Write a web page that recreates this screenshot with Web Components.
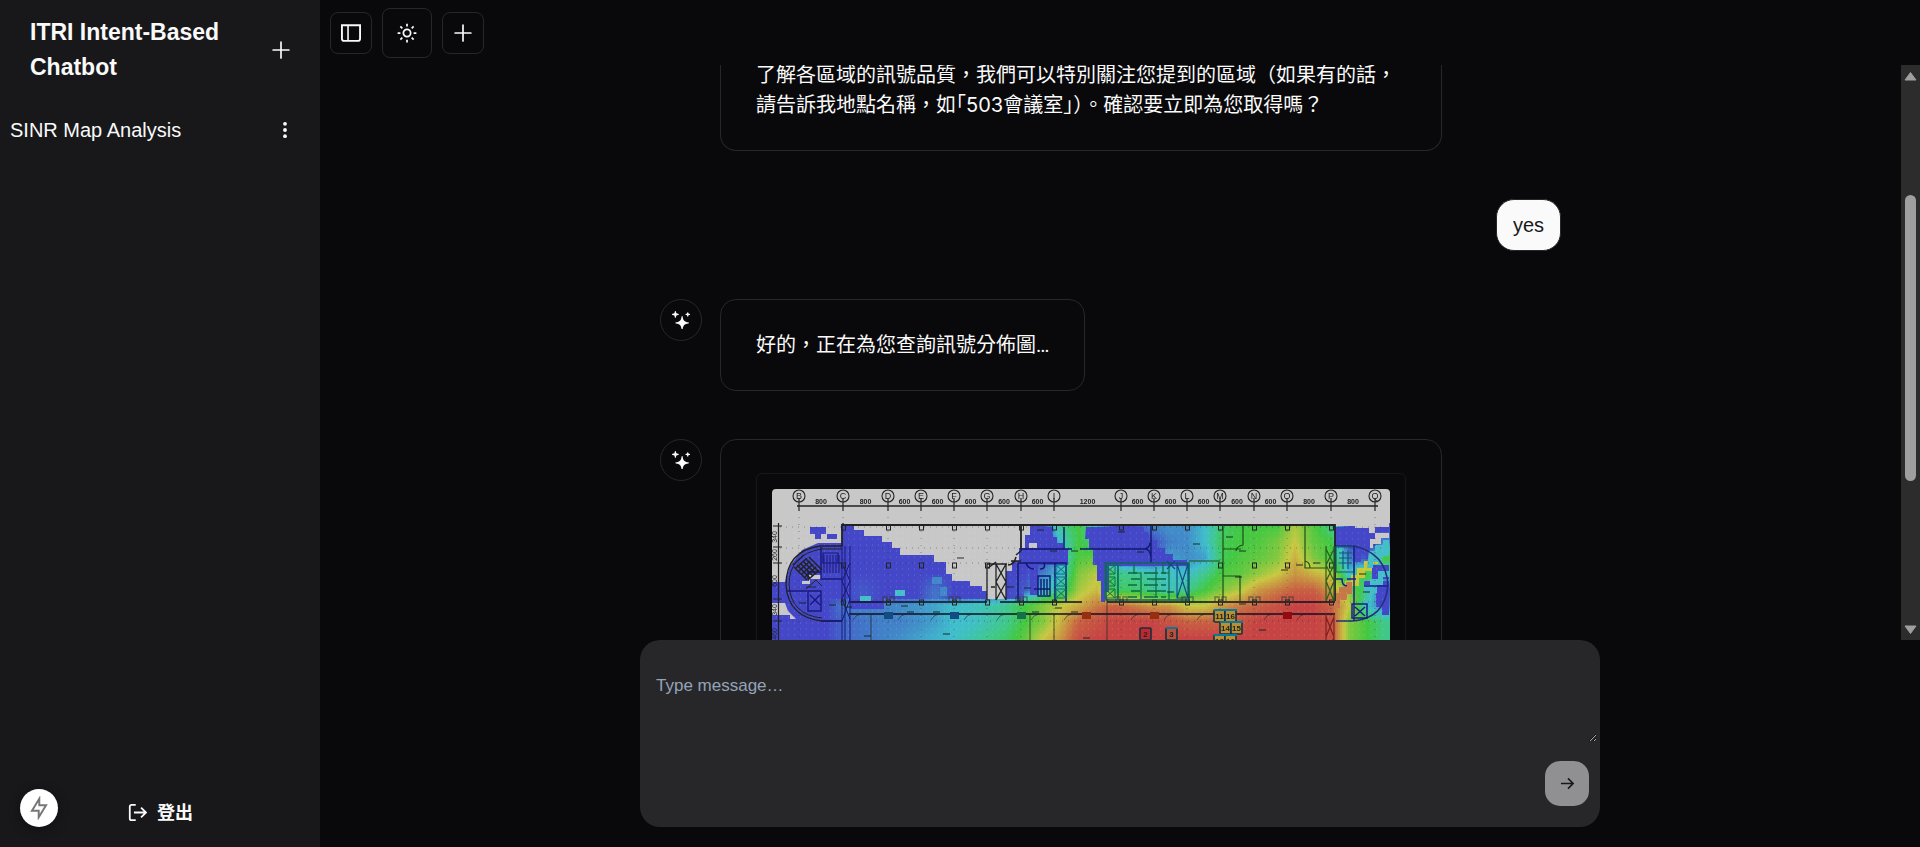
<!DOCTYPE html>
<html lang="zh-TW">
<head>
<meta charset="utf-8">
<title>ITRI Intent-Based Chatbot</title>
<style>
html,body{height:100%}
body{margin:0;background:#09090b;color:#fafafa;font:20px/30px Inter,"Noto Sans CJK TC",sans-serif}
</style>
</head>
<body>
<chat-app></chat-app>
<script>
const define = (name, html, setup) => {
  const t = document.createElement('template');
  t.innerHTML = `<style>*{box-sizing:border-box}svg{display:block}button{font:inherit;color:inherit;background:none;border:0;padding:0;display:flex;align-items:center;justify-content:center}</style>` + html;
  customElements.define(name, class extends HTMLElement {
    constructor() {
      super();
      this.attachShadow({ mode: 'open' }).append(t.content.cloneNode(true));
    }
    connectedCallback() { if (setup) setup(this, this.shadowRoot); }
  });
};

const icons = {
  plus: '<path fill="currentColor" d="M8.75 1a.75.75 0 0 0-1.5 0v6.25H1a.75.75 0 0 0 0 1.5h6.25V15a.75.75 0 0 0 1.5 0V8.75H15a.75.75 0 0 0 0-1.5H8.75z"/>',
  panel: '<path fill="currentColor" fill-rule="evenodd" d="M6.245 2.5H14.5v10a1 1 0 0 1-1 1H6.245v-11ZM4.995 2.5H1.5v10a1 1 0 0 0 1 1h2.495v-11ZM0 1h16v11.5a2.5 2.5 0 0 1-2.5 2.5h-11A2.5 2.5 0 0 1 0 12.5V1Z"/>',
  sun: '<g fill="none" stroke="currentColor" stroke-width="1.4"><circle cx="8" cy="8" r="2.9"/><path d="M8 .5v2.2M8 13.3v2.2M.5 8h2.2M13.3 8h2.2M2.7 2.7l1.55 1.55M11.75 11.75l1.55 1.55M2.7 13.3l1.55-1.55M11.75 4.25l1.55-1.55"/></g>',
  dots: '<g fill="currentColor"><circle cx="8" cy="2.5" r="1.7"/><circle cx="8" cy="8" r="1.7"/><circle cx="8" cy="13.5" r="1.7"/></g>',
  spark: '<path fill="currentColor" d="M2.5.5a.5.5 0 0 1 1 0c.1 1.5.5 1.9 2 2a.5.5 0 0 1 0 1c-1.5.1-1.9.5-2 2a.5.5 0 0 1-1 0c-.1-1.5-.5-1.9-2-2a.5.5 0 0 1 0-1c1.5-.1 1.9-.5 2-2ZM13.5 1.5a.5.5 0 0 1 1 0c.1.8.2.9 1 1a.5.5 0 0 1 0 1c-.8.1-.9.2-1 1a.5.5 0 0 1-1 0c-.1-.8-.2-.9-1-1a.5.5 0 0 1 0-1c.8-.1.9-.2 1-1ZM8.5 5a.5.5 0 0 1 1 0c.4 3.3 1.7 4.600 5 5a.5.5 0 0 1 0 1c-3.3.4-4.600 1.700-5 5a.5.5 0 0 1-1 0c-.4-3.300-1.700-4.600-5-5a.5.5 0 0 1 0-1c3.300-.4 4.600-1.700 5-5Z"/>',
  logout: '<path fill="none" stroke="currentColor" stroke-width="1.5" d="M6.5 1.5H3A1.5 1.5 0 0 0 1.5 3v10A1.5 1.5 0 0 0 3 14.5h3.5M5 8h10M11 3.8 15.2 8 11 12.2"/>',
  arrow: '<path fill="none" stroke="currentColor" stroke-width="1.7" d="M1 8h13M8.5 2.5 14 8l-5.5 5.5"/>',
  bolt: '<path fill="none" stroke="currentColor" stroke-width="1.3" d="M8.2 1.800V6.200h4.500L7.800 14.200V9.800H3.300Z"/>'
};
customElements.define('ui-icon', class extends HTMLElement {
  constructor() { super(); this.attachShadow({ mode: 'open' }); }
  connectedCallback() {
    const s = this.getAttribute('size') || 20;
    this.shadowRoot.innerHTML = `<style>:host{display:block;flex:none}svg{display:block}</style><svg width="${s}" height="${s}" viewBox="0 0 16 16" aria-hidden="true">${icons[this.getAttribute('name')]}</svg>`;
  }
});

define('side-bar', `
<style>
:host{display:flex;flex-direction:column;width:320px;flex:none;background:#18181b;font-family:"Liberation Sans","Noto Sans CJK TC",sans-serif}
header{display:flex;align-items:center;justify-content:space-between;padding:15px 30px;gap:20px}
h1{margin:0;font-size:23px;line-height:35px;font-weight:700}
header button{width:20px;height:40px}
nav{flex:1;padding:5px 10px}
.row{display:flex;align-items:center;justify-content:space-between;height:50px;padding-right:15px}
a{color:inherit;text-decoration:none}
.row button{width:20px;height:30px}
footer{display:flex;align-items:center;padding:0 20px;height:72px;margin-bottom:3px}
.badge{width:38px;height:38px;border-radius:50%;background:#fff;color:#777;box-shadow:0 2px 12px #0006}
.out{gap:10px;font-size:18px;font-weight:600;margin-left:70px;margin-top:9px}
</style>
<header><h1>ITRI Intent-Based Chatbot</h1><button aria-label="New chat"><ui-icon name="plus" size="18"></ui-icon></button></header>
<nav><div class="row"><a href="#">SINR Map Analysis</a><button aria-label="More"><ui-icon name="dots" size="18"></ui-icon></button></div></nav>
<footer><button class="badge" aria-label="Dev tools"><ui-icon name="bolt" size="24"></ui-icon></button><button class="out"><ui-icon name="logout" size="19"></ui-icon>登出</button></footer>`);

define('top-bar', `
<style>
:host{display:flex;align-items:center;gap:10px;padding:8px 10px 7px}
button{width:42px;height:42px;border:1px solid #27272a;border-radius:8px}
.big{width:50px;height:50px}
</style>
<button aria-label="Toggle sidebar"><ui-icon name="panel"></ui-icon></button>
<button class="big" aria-label="Theme"><ui-icon name="sun"></ui-icon></button>
<button aria-label="New chat"><ui-icon name="plus" size="18"></ui-icon></button>`);

define('bot-message', `
<style>
:host{display:flex;gap:18px;align-items:flex-start}
.avatar{width:42px;height:42px;flex:none;border:1px solid #27272a;border-radius:50%;display:grid;place-items:center}
.card{min-width:0;max-width:722px;border:1px solid #27272a;border-radius:16px;padding:30px 35px}
:host([continued]) .avatar{visibility:hidden}
:host([continued]) .card{border-top:0;border-top-left-radius:0;border-top-right-radius:0;padding-top:0}
:host([media]) .card{flex:1;padding-top:33px}
</style>
<div class="avatar"><ui-icon name="spark" size="18"></ui-icon></div><div class="card"><slot></slot></div>`);

define('user-message', `
<style>
:host{display:flex;justify-content:flex-end;font-family:"Liberation Sans",sans-serif}
div{background:#fafafa;color:#18181b;border:1px solid #27272a;border-radius:18px;padding:10px 16px}
</style><div><slot></slot></div>`);

define('scroll-rail', `
<style>
:host{display:flex;flex-direction:column;align-items:center;width:19px;flex:none;background:#2c2c2c;color:#9f9f9f;padding:6px 0 5px}
.track{flex:1;width:11px;display:flex;flex-direction:column}
.before{flex:114}.thumb{flex:286;background:#9f9f9f;border-radius:6px}.after{flex:144}
</style>
<svg width="13" height="10"><path d="M6.5 1.5 12 9H1Z" fill="currentColor" stroke="currentColor" stroke-linejoin="round"/></svg>
<div class="track"><div class="before"></div><div class="thumb"></div><div class="after"></div></div>
<svg width="13" height="10"><path d="M6.5 8.5 12 1H1Z" fill="currentColor" stroke="currentColor" stroke-linejoin="round"/></svg>`);

/* Signal strength samples: one row per 16 px from y = 36, one column per 18 px. */
const field = [
 [0,0,0,0,0,0,0,0,0,0,0,0,0,0,0,0,3,4,2,0,0,1,1.3,1.2,2,3.5,4,4,4,5.6,4.3,3,0,0,0],
 [0,0,0,0,0,0,0,0,0,0,0,0,0,0,0,0,2,4,3,0,0,0,1,1.2,2,3.8,4,4.2,4.8,6,4.5,4,0,0,1],
 [0,0,0,0,0,0,0,0,0,0,0,0,0,0,0,0,2,4.2,4.5,1,0,0,1.5,1.2,1.5,3.7,4.2,4.5,5,6.5,5,4,1,0,4],
 [0,0,0,0,0,0,0,0,0,0,0,0,0,0,0,1,2,5,5.8,3,3,2.5,2.2,2,3,4.2,4.5,5.3,6,7,6.5,6,2,4,2],
 [0,0,0,0,0,0.3,0,0,0,0.8,0,0,0,0,0.3,2,3,5.5,6.3,3.5,3.5,3,2.2,3,4,5,5.8,7,7.5,8,8,7,5,3,0],
 [0,0,0,0,1,1,1,1.2,1.4,1.6,2,2.2,2.5,3,4,5,6,6.6,7.5,8,7.5,7,7,6,6,7,7.6,8,8.5,9,9,8,6,2,1],
 [0,0,0,0,.6,.8,1,1,1.2,1.5,2,2,2.5,3,4,5,6.5,8,8.5,9,9,9,8.5,8,8,8,8.5,9,9,9,9,8.6,5,4,3],
 [0,0,0,0,.6,.8,1,1.2,1.5,1.8,2,2.5,3,3.5,4.5,6,7,8.5,9,9,9,9,9,9,9,9,9,9,9,9,9,8.6,5,4,3]];
const ramp = [[68,72,200],[66,128,200],[64,190,204],[64,200,140],[68,200,66],[130,200,64],[200,200,66],[200,150,66],[200,96,66],[198,68,68]];
const lerp = (a, b, t) => a + (b - a) * t;
const colour = v => {
  const i = Math.min(8, Math.floor(v)), t = v - i;
  return `rgb(${ramp[i].map((c, k) => Math.round(lerp(c, ramp[i + 1][k], t)))})`;
};

define('signal-map', `
<style>
:host{display:block;border:1px solid #18181b;border-radius:6px;padding:15px}
figure{margin:0;display:grid;border-radius:4px;overflow:hidden;background:#c8c8c8}
canvas,svg{grid-area:1/1;width:100%;height:auto}
svg{font:7px "Liberation Sans",sans-serif}
</style>
<figure><canvas width="618" height="220"></canvas>
<svg viewBox="0 0 618 220" role="img" aria-label="SINR map"></svg></figure>`, (host, root) => {
  const ctx = root.querySelector('canvas').getContext('2d');
  for (let y = 34; y < 220; y += 2) for (let x = 0; x < 618; x += 2) {
    // the corridor wall at y = 110 separates the rooms on the left from the hall
    const wall = y < 110 && x < 252;
    const gx = Math.min(x / 18, 33.99), gy = Math.max(0, Math.min((y - 36) / 16, wall ? 4 : 6.99));
    const i = Math.floor(gx), j = Math.floor(gy);
    ctx.fillStyle = colour(lerp(lerp(field[j][i], field[j][i + 1], gx - i), lerp(field[j + 1][i], field[j + 1][i + 1], gx - i), gy - j));
    ctx.fillRect(x, y, 2, 2);
  }
  const shape = (fill, d) => { ctx.fillStyle = fill; ctx.fill(new Path2D(d)); };
  shape('#4448c8', 'M258 38h23v10h4v6h6v6h5v16h-30v30h-8V80h-12V60h6V48h6Z M78 110h34v10H78Z');
  shape('#4448c8', 'M314 38h58v5h5v8h8v8h8v6h8v6h14v6h-78v26h-4v10h-4V92h-4V76h-4V60h-4V50h-4Z');
  shape('#4448c8', 'M563 38h38v5h5v14h-9v8h-8v8h-6v-16h-20Z M592 92h25v12h-25Z M604 104h13v22h-7v-8h-6Z M600 76h17v14h-17Z');
  shape('#c8c835', 'M573 92h6v-6h6v-7h7v-7h7v-5h7v8h-6v7h-7v7h-6v8h-7v6h-7Z');
  shape('#44bec8', 'M597 62h6v-6h8v-5h6v16h-8v6h-8v6h-6Z M592 96h6v-6h8v-8h11v6h-6v8h-6v8h-13Z');
  shape('#c87848', 'M562 104h5v-6h7v-5h6v12h-5v6h-7v8h-6Z');
  shape('#4088c8', 'M160 88h10v7h-10Z M168 98h7v9h-7Z');
  shape('#44bec8', 'M123 101h10v6h-10Z M88 107h11v5H88Z');
  // areas without coverage
  const grey = '#c8c8c8';
  shape(grey, 'M0 34h258v12h-5v13h-6v13h-7v10h-6v28h-19v-8h-5v-5h-12v-5h-18v-7h-6v-12h-12v-7h-34v-7h-8v-6h-10v-6h-18v-6h-10v-5h-10v-4H70v22H46l-16 7-12 16-5 16H0Z');
  shape(grey, 'M0 114h13l3 8 8 8h-6v-4H0ZM30 92h7v-6h12v4H38v5h-8ZM257 54h8v5h-8Z M258 34h359v3H258Z');
  shape(grey, 'M583 34h34v5h-14v5h-6v-5h-14ZM603 44h14v5h-8v6h-8v4h-3V50h5Z');
  shape('#4448c8', 'M38 38h16v7h-5v5h-6v-5h-5ZM55 45h10v5H55Z M603 38h14v5h-14Z');

  const L = [], T = [];
  const line = (d, w = 1, c = '#222') => L.push(`<path d="${d}" fill="none" stroke="${c}" stroke-width="${w}"/>`);
  const text = (x, y, s, extra = '') => T.push(`<text x="${x}" y="${y}" text-anchor="middle" ${extra}>${s}</text>`);
  const axes = { B: 27, C: 71, D: 116, E: 149, F: 182, G: 215, H: 249, I: 282, J: 349, K: 382, L: 415, M: 448, N: 482, O: 515, P: 559, Q: 603 };
  const xs = Object.values(axes);
  line('M25 17H606', 1.5);
  Object.entries(axes).forEach(([k, x]) => {
    L.push(`<circle cx="${x}" cy="7" r="6" fill="none" stroke="#222" stroke-width="1.1"/>`);
    line(`M${x} 9V22`, 1.2);
    line(`M${x} 28V220`, 1, '#2226" stroke-dasharray="1 6');
    text(x, 10, k, 'font-size="9"');
  });
  xs.slice(1).forEach((x, i) => { const w = x - xs[i]; text(x - w / 2, 15, w > 60 ? 1200 : w > 40 ? 800 : 600, 'font-weight="bold"'); });
  [38, 59, 74, 113, 132].forEach(y => line(`M8 ${y}H612`, 1, '#2226" stroke-dasharray="1 5'));
  for (let y = 44; y < 220; y += 6) line(`M4 ${y}H616`, 1, '#fff3" stroke-dasharray="1 5');
  line('M6.5 34V220M1 37h9M1 58h9M1 74h9M1 110h9M1 132h9', 1.2);
  [[48, 340], [66, 260], [92, 600], [121, 340], [145, 460]].forEach(([y, s]) => text(0, 0, s, `transform="translate(5 ${y}) rotate(-90)"`));
  // outer walls
  line('M70 57V36H563V112M249 36V60', 1.8);
  line('M77 113H215M228 113H310M335 113H563M77 125H563', 1.3, '#112');
  line('M70 57H48Q14 62 14 96Q16 128 50 132H70', 1.3);
  line('M70 60H50Q17 65 17 96Q19 126 50 129', 1);
  line('M564 57H582Q614 64 616 96Q613 130 580 132H564', 1.6, '#20307a');
  line('M70 57V220M73 57V220M78 57V220M70 74l8 18-8 18 8 20M78 74l-8 18 8 18-8 22', 1, '#18187a');
  line('M49 58V90h21M49 132h21M36 90v-7h13M36 102h13v20h-13ZM38 106l10 10M48 106l-10 10M15 102h20', 1.4, '#18187a');
  for (let k = 0; k < 6; k++) line(`M${52 + k * 3} 66v18`, 1, '#18187a');
  line('M51 64h15v10H51ZM51 74h18', 1.2, '#18187a');
  // seating in the round room
  for (let k = 0; k < 6; k++) {
    line(`M${22 + k * 3} ${78 - k * 2}l13 13`, 1.5);
    line(`M${21 + k * 3} ${76 + k * 3}l11-10`, 1.4);
  }
  line('M34 100l10-9 6 6M34 98h10', 1);
  // columns along the facades
  xs.slice(1, 15).forEach((x, i) => { [37, 75, 112].forEach(y => { if (y !== 75 || i < 5 || i > 9) L.push(`<rect x="${x - 1.5}" y="${y - 1}" width="4" height="5" fill="none" stroke="#222"/>`); }); });
  // service core, left
  line('M215 75v36M224 75v36M234 75v36M215 75h20M224 75l10 18-10 18M234 75l-10 18 10 18', 1.3);
  line('M216 79l8-6M236 76q6 0 8-8M244 66l6-5M239 72h10M219 98h4', 1.5);
  line('M248 60H300M246 74H294V113M246 74V113M283 74V112M254 74q2 6 8 6M272 74q2 6-4 6M292 38V60', 1.5, '#101870');
  line('M266 87h12v20h-12ZM269 90v16M272 90v16M275 90v16M262 100h16', 1.4, '#101870');
  for (const x of [284, 333]) for (const y of [76, 88, 100]) line(`M${x} ${y}h10v9h-10ZM${x} ${y}l10 9M${x + 10} ${y}l-10 9`, 1, x < 300 ? '#0c6888' : '#0f7048');
  // service core, middle
  line('M308 60H373q4-1 5-6M379 36V74M373 60q5 0 6 8', 1.4, '#101870');
  line('M334 74V111H417V74ZM346 75v36', 1.6, '#0a6a55');
  for (let k = 0; k < 5; k++) line(`M${356 + (k % 2) * 3} ${84 + k * 6}h9M${372 + (k % 2) * 3} ${84 + k * 6}h14M389 ${84 + k * 6}h5`, 1.3, '#0a6a45');
  line('M362 75v9h7v26M384 78v30M391 75v9h6M397 74v37', 1.2, '#0a6a45');
  line('M405 75h11v34h-11ZM405 75l11 34M416 75l-11 34M395 72l8 8M403 72l-8 8', 1.1, '#104880');
  // rooms, right
  line('M417 72H448M451 36V113M451 60h18M471 36v20q-6 1-7 6M451 87h17v25M533 36V79h22M533 72q5 1 5 7M455 87h12', 1.2, '#185018');
  line('M554 57v55M562 57v55M554 60l8 16-8 16 8 20M562 60l-8 16 8 16-8 20', 1.2, '#28601c');
  line('M554 125v95M562 125v95M554 128l8 20-8 20M562 128l-8 20', 1.2, '#802020');
  line('M564 58h18v25h-18ZM567 64h13M567 69h13M567 74h13M571 62v18M576 62v18', 1.2, '#105878');
  line('M582 57v75M564 90h6q0 7 5 7M575 90h9M592 97h24M580 115h15v14h-15ZM583 118l10 9M593 118l-10 9', 1.5, '#182088');
  // corridor doors
  xs.slice(1, 14).forEach((x, i) => {
    if (i % 2 || i > 9) line(`M${x - 5} 108h4v5h-4ZM${x + 2} 108h4v5h-4Z`, 1.5, '#3338');
    line(`M${x + 18} 125q-6 1-8 6`, 1, '#2228');
  });
  [116, 182, 249, 314, 382, 515].forEach(x => L.push(`<rect x="${x - 4}" y="123" width="9" height="7" fill="${x < 200 ? '#124c80' : x < 300 ? '#147048' : x > 500 ? '#900c10' : '#943010'}"/>`));
  line('M99 125V220M258 125V220M282 125V220M335 110V220', 1.2, '#2229');
  [[30,114],[60,116],[76,118],[132,117],[138,123],[164,123],[95,147],[174,145],[188,69],[238,98],[255,99],[268,41],[281,62],[302,62],[263,123],[286,119],[302,123],[314,149],[349,43],[368,63],[398,103],[424,55],[457,48],[470,62],[466,88],[512,81],[527,76],[544,74],[470,115],[490,141],[590,85],[594,103]].forEach(([x, y]) => line(`M${x - 3} ${y}h7`, 2, '#1227'));
  // numbered seats
  const seat = (x, y, s, c) => { L.push(`<rect x="${x}" y="${y}" width="11" height="12" rx="1" fill="${c}" stroke="#14303c" stroke-width="1.6"/>`); text(x + 5.5, y + 9, s, 'font-weight="bold" font-size="8"'); };
  seat(368, 139, 2, '#c02830'); seat(394, 139, 3, '#b8503c');
  [[442, 121, 11], [453, 121, 16], [448, 133, 14], [459, 133, 15], [442, 146, 13], [453, 146, 12]].forEach(([x, y, s]) => seat(x, y, s, '#b89032'));
  line('M394 139h11M442 121h23M448 133h23M442 146h23', 1.8, '#0878a0');
  root.querySelector('svg').innerHTML = L.join('') + `<g fill="#222">${T.join('')}</g>`;
});

define('chat-feed', `
<style>
:host{display:flex;flex:1;min-height:0;overflow:hidden}
.view{flex:1;overflow:hidden;min-width:0}
.list{max-width:961px;margin:-5px auto 0;padding:0 30px;display:flex;flex-direction:column;gap:48px}
.half{font-feature-settings:"halt"}
.dots{font-family:Roboto,sans-serif}
</style>
<div class="view"><div class="list">
<bot-message continued>了解各區域的訊號品質，我們可以特別關注您提到的區域（如果有的話，請告訴我地點名稱，如<span class="half">「</span>503會議室」）。確認要立即為您取得嗎？</bot-message>
<user-message>yes</user-message>
<bot-message>好的，正在為您查詢訊號分佈圖<span class="dots">…</span></bot-message>
<bot-message media><signal-map></signal-map></bot-message>
</div></div><scroll-rail></scroll-rail>`);

define('message-composer', `
<style>
:host{display:block;padding:0 20px 20px}
form{max-width:960px;margin:0 auto;background:#27272a;border-radius:20px;display:flex;flex-direction:column;padding:0 3px 21px 0}
textarea{display:block;width:100%;height:102px;padding:32px 16px 0;border:0;outline:0;background:none;color:inherit;font:17px/28px "Liberation Sans","Noto Sans CJK TC",sans-serif;resize:vertical}
textarea::placeholder{color:#94a3b8;opacity:1}
button{align-self:flex-end;width:44px;height:45px;margin:19px 8px 0 0;border-radius:15px;background:#909092;color:#18181b}
</style>
<form><textarea aria-label="Message" placeholder="Type message…"></textarea><button type="button" aria-label="Send"><ui-icon name="arrow" size="15"></ui-icon></button></form>`);

define('chat-app', `
<style>
:host{display:flex;height:100vh}
main{flex:1;min-width:0;display:flex;flex-direction:column}
</style>
<side-bar></side-bar><main><top-bar></top-bar><chat-feed></chat-feed><message-composer></message-composer></main>`);
</script>
</body>
</html>
